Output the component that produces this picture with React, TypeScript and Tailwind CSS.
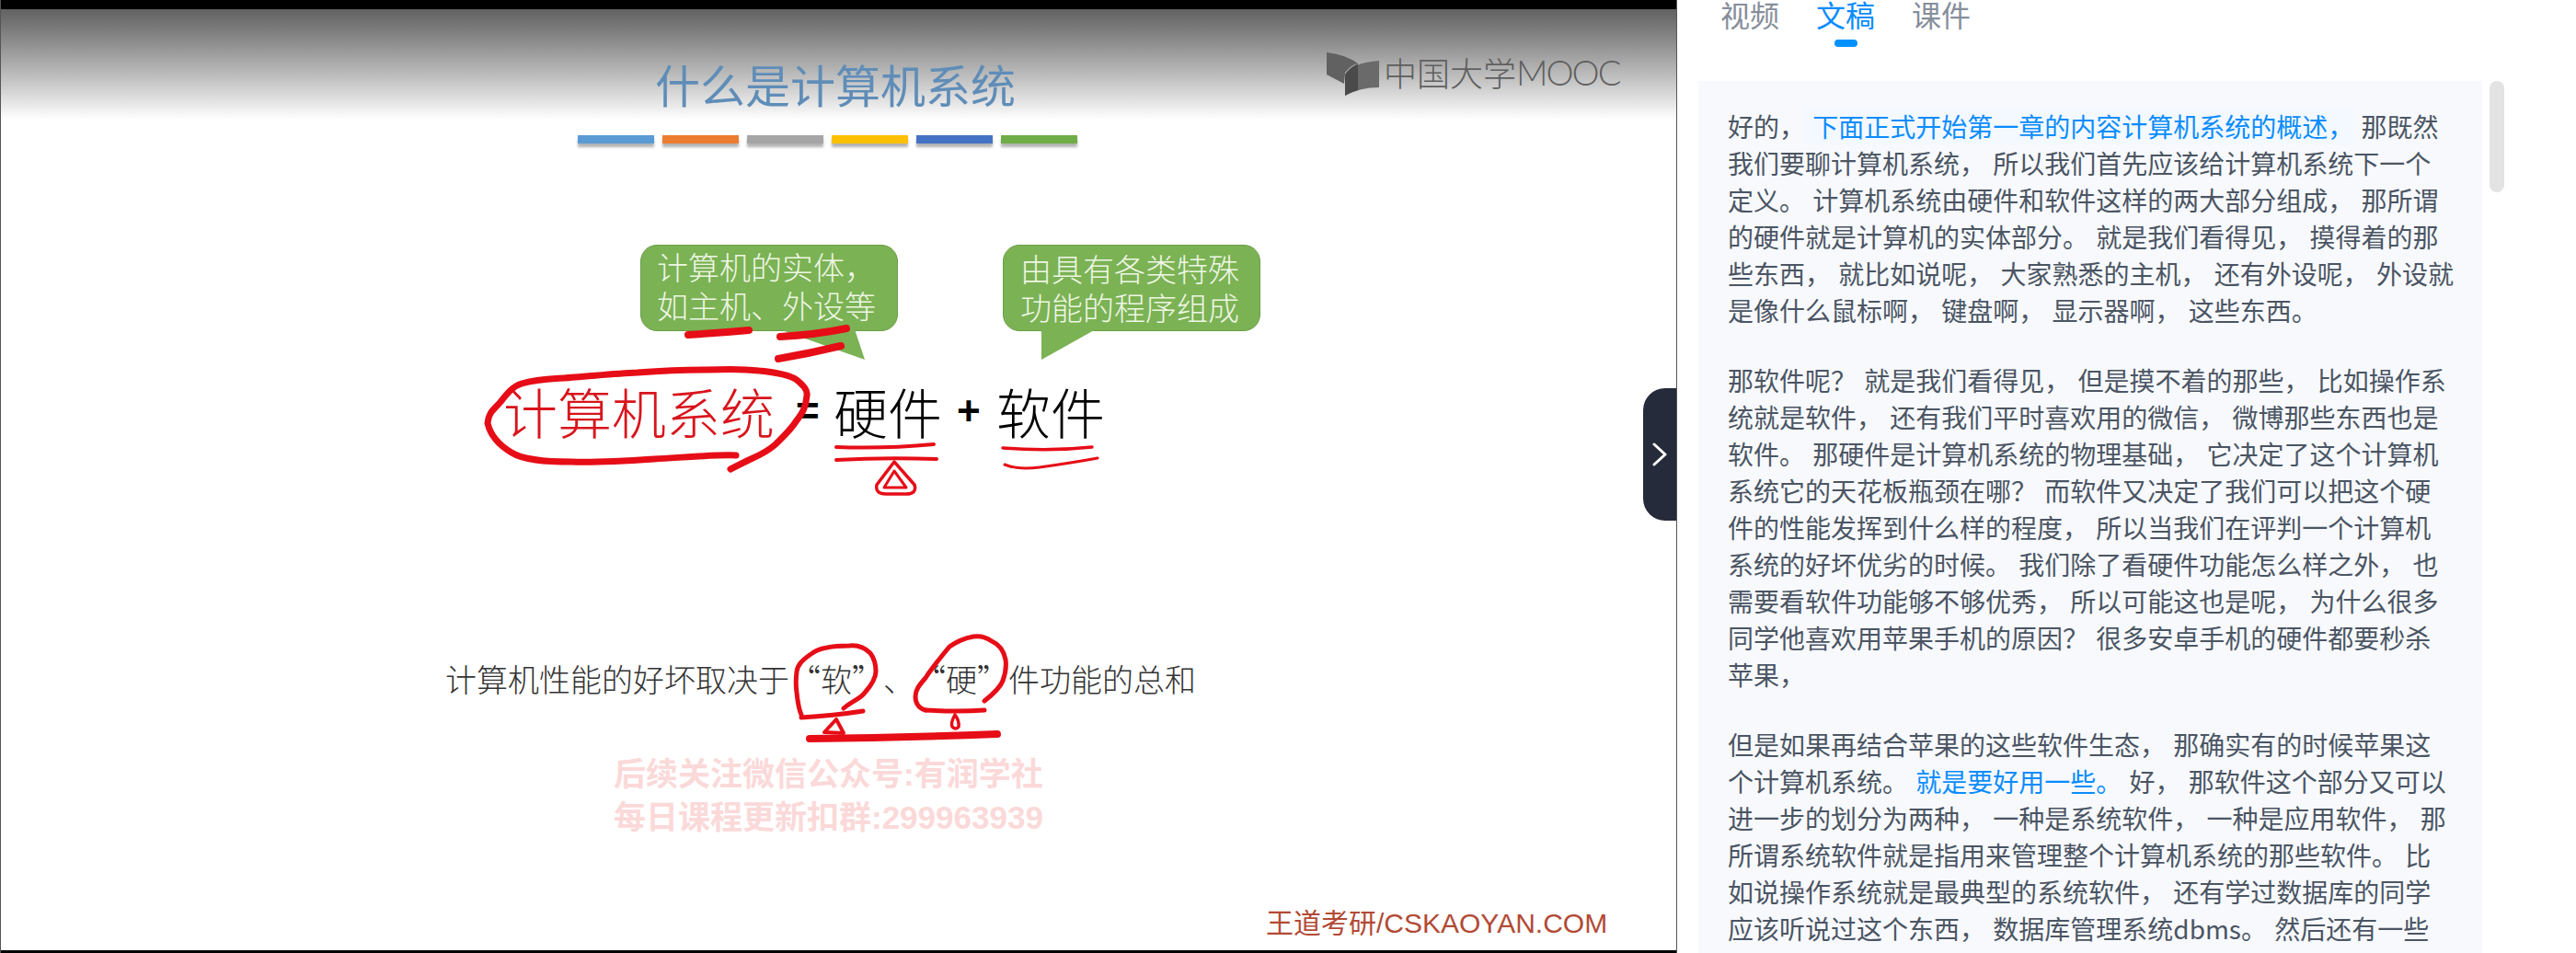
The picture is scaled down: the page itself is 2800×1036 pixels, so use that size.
const cjk = "font-['Noto_Sans_CJK_SC',sans-serif]";

const barColors = ['bg-[#5b9bd5]', 'bg-[#ed7d31]', 'bg-[#a5a5a5]', 'bg-[#ffc000]', 'bg-[#4472c4]', 'bg-[#70ad47]'];

function Ink() {
  return (
    <svg className="absolute left-0 top-0 pointer-events-none" width="1822" height="1036" viewBox="0 0 1822 1036" fill="none" stroke="#e60d17" strokeLinecap="round" strokeLinejoin="round">
      {/* bubble marks */}
      <path d="M747 364 Q780 362 813 359" strokeWidth="8" />
      <path d="M847 366 Q885 364 919 357" strokeWidth="8" />
      <path d="M845 390 Q880 384 913 376" strokeWidth="8" />
      {/* circle round the red term */}
      <path d="M799 495 C780 494 745 497 710 499 C680 501 650 503 620 502 C590 502 568 500 555 492 C540 483 532 473 529 460 C530 448 536 445 543 437 C550 428 556 420 566 417 C585 411 605 412 624 410 C650 408 670 406 692 405 C720 403 745 402 767 402 C790 401 808 401 824 403 C845 405 858 408 865 413 C874 420 877 425 876 430 C875 442 872 448 865 457 C858 468 850 475 842 483 C832 492 822 496 813 500 L793 510" strokeWidth="7" />
      <path d="M908 486 Q960 488 1014 483" strokeWidth="4" />
      <path d="M908 500 Q960 497 1017 499" strokeWidth="4" />
      <path d="M971 502 L952 527 Q950 537 962 537 L984 537 Q996 537 993 527 Z" strokeWidth="3.5" />
      <path d="M971 512 L960 530 L984 530 Z" strokeWidth="3" />
      <path d="M1089 487 Q1140 491 1186 486" strokeWidth="3.5" />
      <path d="M1091 505 Q1105 511 1129 508 Q1165 503 1192 498" strokeWidth="3" />
      {/* lower row */}
      <path d="M916 770 C925 762 934 760 939 753 C946 745 951 738 951 730 C951 720 948 714 945 710 C938 703 930 701 922 702 C905 702 890 704 882 710 C870 718 866 723 865 730 C864 738 864 746 865 753 C866 763 867 770 870 777" strokeWidth="5" />
      <path d="M870 780 Q905 778 937 773" strokeWidth="5" />
      <path d="M908 782 L895 796 L916 797 Z" strokeWidth="4" />
      <path d="M1069 762 C1078 755 1086 748 1089 740 C1092 732 1093 724 1092 717 C1090 707 1084 700 1077 697 C1070 692 1063 691 1057 692 C1046 694 1038 698 1031 703 C1022 714 1012 726 1005 737 C998 745 994 750 994 757 C994 765 998 770 1005 772" strokeWidth="5" />
      <path d="M1005 772 Q1040 774 1069 772" strokeWidth="5" />
      <path d="M1037 777 Q1032 786 1034 790 Q1038 794 1041 790 Q1042 784 1037 777" strokeWidth="3.5" />
      <path d="M879 803 Q980 802 1083 798" strokeWidth="8" />
    </svg>
  );
}

function BookLogo() {
  return (
    <svg width="57" height="47" viewBox="0 0 57 47">
      <path d="M0 0 L0 24 L19 34 L20 22 Q27 13 34 12 Q20 2 0 0 Z" fill="#616161" />
      <path d="M57 9 L57 38 Q36 38 20 47 L20 24 Q28 11 57 9 Z" fill="#6a6a6a" />
      <path d="M20 24 Q24 17 34 12 L34 41 Q27 43 20 47 Z" fill="#404040" opacity="0.75" />
    </svg>
  );
}

function Bubble({ lines, tail, textClass }: { lines: string[]; tail: string; textClass: string }) {
  return (
    <div className={`relative w-[280px] h-[94px] rounded-[18px] border border-[#6c9f49] bg-[#7bb254] text-[34px] leading-[42px] text-[#eef6e4] font-light whitespace-nowrap ${textClass}`}>
      {lines.map((l) => (
        <div key={l}>{l}</div>
      ))}
      <svg className="absolute left-0 top-[91px]" width="280" height="36" viewBox="0 0 280 36">
        <path d={tail} fill="#7bb254" />
      </svg>
    </div>
  );
}

// the slide's quote marks take a full cell, the font's own are narrow
function Quoted({ children }: { children: string }) {
  return (
    <>
      <span className="inline-block w-[34px] text-right">“</span>
      {children}
      <span className="inline-block w-[34px] text-left">”</span>
    </>
  );
}

function Slide() {
  return (
    <div className={`relative w-[1823px] h-[1036px] shrink-0 bg-white border-r border-l border-[#555] overflow-hidden ${cjk}`}>
      <div className="h-[10px] bg-black" />
      <div className="h-[120px] bg-gradient-to-b from-[#616161] to-white" />
      <div className="absolute left-[711px] top-[61px] text-[49px] leading-[60px] text-[#5f8db8] whitespace-nowrap">什么是计算机系统</div>

      <div className="absolute left-[1441px] top-[57px] flex items-start gap-[5px]">
        <BookLogo />
        <div className="flex items-center h-[42px] text-[#5f5f5f] whitespace-nowrap font-light">
          <span className="text-[36px] leading-[42px]">中国大学</span>
          <span className="font-['Lato',sans-serif] text-[38px] leading-[42px] font-light tracking-[-2px]">MOOC</span>
        </div>
      </div>

      <div className="flex gap-[9px] ml-[627px] mt-[17px]">
        {barColors.map((c) => (
          <div key={c} className={`w-[83px] h-[9px] ${c} shadow-[0_4px_3px_rgba(0,0,0,0.3)]`} />
        ))}
      </div>

      <div className="flex gap-[114px] ml-[695px] mt-[110px]">
        <Bubble lines={['计算机的实体，', '如主机、外设等']} tail="M150 0 L243 33 L232 0 Z" textClass="pl-[17px] pt-[2px]" />
        <Bubble lines={['由具有各类特殊', '功能的程序组成']} tail="M41 33 L100 0 L41 0 Z" textClass="pl-[18px] pt-[4px]" />
      </div>

      <div className="flex items-center ml-[546px] mt-[55px] h-[64px] text-[59px] leading-[64px] font-light text-black whitespace-nowrap">
        <span className="text-[#d8141c] w-[318px]">计算机系统</span>
        <span className="font-['Liberation_Sans',sans-serif] font-bold text-[44px] w-[41px]">=</span>
        <span className="w-[134px]">硬件</span>
        <span className="font-['Liberation_Sans',sans-serif] font-bold text-[44px] w-[43px]">+</span>
        <span>软件</span>
      </div>

      <div className="ml-[483px] mt-[237px] h-[44px] text-[34px] leading-[44px] font-light text-[#333] whitespace-nowrap">
        计算机性能的好坏取决于<Quoted>软</Quoted>、<Quoted>硬</Quoted>件功能的总和
      </div>

      <div className="ml-[666px] mt-[58px] text-[35px] leading-[47px] font-bold text-[#fbd9d9] whitespace-nowrap font-['Liberation_Sans','Noto_Sans_CJK_SC',sans-serif]">
        <div>后续关注微信公众号:有润学社</div>
        <div>每日课程更新扣群:299963939</div>
      </div>

      <div className="absolute left-[1375px] top-[985px] text-[30px] leading-[38px] text-[#b24a35] whitespace-nowrap font-['Liberation_Sans','Noto_Sans_CJK_SC',sans-serif]">
        王道考研/CSKAOYAN.COM
      </div>

      <div className="absolute left-0 right-0 bottom-0 h-[3px] bg-black" />
      <Ink />
      <div className="absolute left-[1785px] top-[422px] w-[36px] h-[144px] rounded-l-[24px] bg-[#252b3a] flex items-center justify-center">
        <svg width="16" height="26" viewBox="0 0 16 26" fill="none" stroke="white" strokeWidth="3" strokeLinecap="round" strokeLinejoin="round">
          <path d="M2 2 L14 13 L2 24" />
        </svg>
      </div>
    </div>
  );
}

function Transcript() {
  return (
    <div className={`relative flex-1 h-[1036px] overflow-hidden bg-white ${cjk}`}>
      <div className="flex gap-[40px] pl-[47px] h-[88px] text-[32px] leading-[30px] text-[#868e9b]">
        <div className="h-[30px]">视频</div>
        <div className="relative h-[30px] text-[#0a8cff]">
          文稿
          <div className="absolute left-[20px] top-[43px] w-[25px] h-[8px] rounded-full bg-[#0091ff]" />
        </div>
        <div className="h-[30px]">课件</div>
      </div>
      <div className="flex">
        <div className="ml-[23px] w-[852px] h-[948px] bg-[#f7f9fd] pl-[32px] pr-[30px] pt-[29px] text-[28px] leading-[40px] text-[#4b5563] [word-spacing:2px]">
          <p className="mb-[36px]">
            好的，<span className="bg-[#f3f9ff] text-[#0a8cff]"> 下面正式开始第一章的内容计算机系统的概述，</span> 那既然我们要聊计算机系统， 所以我们首先应该给计算机系统下一个定义。 计算机系统由硬件和软件这样的两大部分组成， 那所谓的硬件就是计算机的实体部分。 就是我们看得见， 摸得着的那些东西， 就比如说呢， 大家熟悉的主机， 还有外设呢， 外设就是像什么鼠标啊， 键盘啊， 显示器啊， 这些东西。
          </p>
          <p className="mb-[36px]">
            那软件呢？ 就是我们看得见， 但是摸不着的那些， 比如操作系统就是软件， 还有我们平时喜欢用的微信， 微博那些东西也是软件。 那硬件是计算机系统的物理基础， 它决定了这个计算机系统它的天花板瓶颈在哪？ 而软件又决定了我们可以把这个硬件的性能发挥到什么样的程度， 所以当我们在评判一个计算机系统的好坏优劣的时候。 我们除了看硬件功能怎么样之外， 也需要看软件功能够不够优秀， 所以可能这也是呢， 为什么很多同学他喜欢用苹果手机的原因？ 很多安卓手机的硬件都要秒杀苹果，
          </p>
          <p>
            但是如果再结合苹果的这些软件生态， 那确实有的时候苹果这个计算机系统。 <span className="text-[#0a8cff]">就是要好用一些。</span> 好， 那软件这个部分又可以进一步的划分为两种， 一种是系统软件， 一种是应用软件， 那所谓系统软件就是指用来管理整个计算机系统的那些软件。 比如说操作系统就是最典型的系统软件， 还有学过数据库的同学应该听说过这个东西， 数据库管理系统dbms。 然后还有一些
          </p>
        </div>
        <div className="ml-[8px] w-[16px] h-[121px] rounded-full bg-[#e3e3e3]" />
      </div>
    </div>
  );
}

export default function App() {
  return (
    <div className="flex w-[2800px] h-[1036px] overflow-hidden bg-white">
      <Slide />
      <Transcript />
    </div>
  );
}
